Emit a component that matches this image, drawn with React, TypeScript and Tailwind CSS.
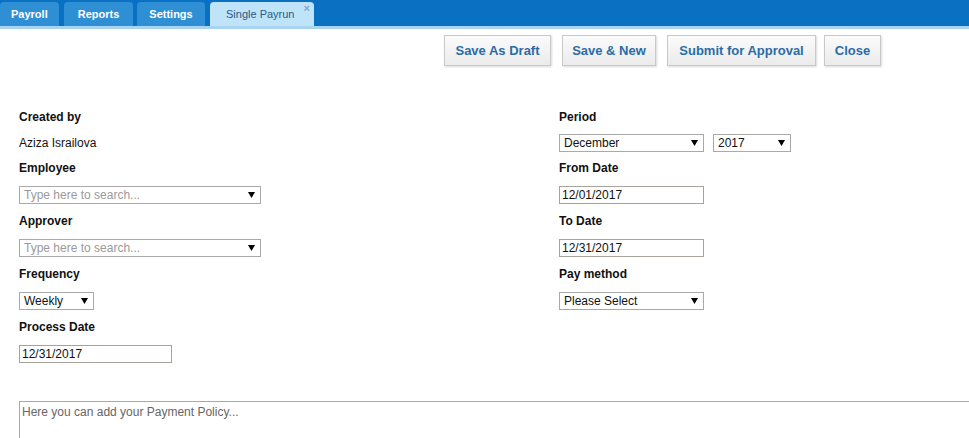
import React from 'react';

const font = { fontFamily: '"Liberation Sans", Arial, sans-serif' };

function Tab({ label, width, active }: { label: string; width: string; active?: boolean }) {
  if (active) {
    return (
      <div className={`relative h-[24px] rounded-t-[4px] bg-[#bfe4fa] pl-[16px] text-[11px] leading-[24px] text-[#2a5a85] ${width}`}>
        {label}
        <span className="absolute right-[4px] top-[-6px] text-[11px] font-bold text-[#7fa6c6]">×</span>
      </div>
    );
  }
  return (
    <div className={`h-[24px] rounded-t-[4px] bg-[#2f8fd5] text-center text-[11px] font-bold leading-[24px] text-white ${width}`}>
      {label}
    </div>
  );
}

function ActionButton({ label, width }: { label: string; width: string }) {
  return (
    <button
      className={`h-[31px] border border-[#c9c9c9] bg-gradient-to-b from-[#fbfbfb] to-[#ebebeb] text-center text-[13px] font-bold text-[#2b6ca6] shadow-[1px_1px_2px_rgba(0,0,0,0.15)] ${width}`}
    >
      {label}
    </button>
  );
}

function Label({ children }: { children: React.ReactNode }) {
  return <div className="h-[17px] text-[12px] font-bold leading-[17px] text-[#111]">{children}</div>;
}

function FakeSelect({ value, width, placeholder }: { value: string; width: string; placeholder?: boolean }) {
  return (
    <div
      className={`flex h-[18px] items-center justify-between border border-[#a9a9a9] bg-white pl-[4px] pr-[5px] text-[12px] ${width} ${
        placeholder ? 'text-[#9a9a9a]' : 'text-[#111]'
      }`}
    >
      <span>{value}</span>
      <svg width="7" height="6" viewBox="0 0 7 6">
        <path d="M0 0H7L3.5 6Z" fill="#000" />
      </svg>
    </div>
  );
}

function DateInput({ value, width }: { value: string; width: string }) {
  return (
    <div className={`flex h-[18px] items-center border border-[#a7a39a] bg-white pl-[2px] text-[12px] text-[#111] ${width}`}>
      {value}
    </div>
  );
}

export default function App() {
  return (
    <div className="relative h-[438px] w-[969px] overflow-hidden bg-white" style={font}>
      <div className="flex h-[26px] items-end bg-[#0a71c2]">
        <Tab label="Payroll" width="w-[59px] !text-left pl-[11px]" />
        <div className="ml-[5px]">
          <Tab label="Reports" width="w-[69px]" />
        </div>
        <div className="ml-[4px]">
          <Tab label="Settings" width="w-[68px]" />
        </div>
        <div className="ml-[5px]">
          <Tab label="Single Payrun" width="w-[104px]" active />
        </div>
      </div>
      <div className="h-[3px] bg-[#a9d4f1]" />

      <div className="mt-[6px] flex justify-end pr-[88px]">
        <ActionButton label="Save As Draft" width="w-[107px]" />
        <div className="ml-[11px]">
          <ActionButton label="Save & New" width="w-[94px]" />
        </div>
        <div className="ml-[11px]">
          <ActionButton label="Submit for Approval" width="w-[149px]" />
        </div>
        <div className="ml-[8px]">
          <ActionButton label="Close" width="w-[57px]" />
        </div>
      </div>

      <div className="mt-[43px] grid grid-cols-[540px_1fr] pl-[19px]">
        <div className="flex flex-col">
          <Label>Created by</Label>
          <div className="mt-[8px] h-[18px] text-[12px] leading-[18px] text-[#111]">Aziza Israilova</div>
          <div className="mt-[8px]">
            <Label>Employee</Label>
          </div>
          <div className="mt-[9px]">
            <FakeSelect value="Type here to search..." width="w-[242px]" placeholder />
          </div>
          <div className="mt-[9px]">
            <Label>Approver</Label>
          </div>
          <div className="mt-[9px]">
            <FakeSelect value="Type here to search..." width="w-[242px]" placeholder />
          </div>
          <div className="mt-[9px]">
            <Label>Frequency</Label>
          </div>
          <div className="mt-[9px]">
            <FakeSelect value="Weekly" width="w-[75px]" />
          </div>
          <div className="mt-[9px]">
            <Label>Process Date</Label>
          </div>
          <div className="mt-[9px]">
            <DateInput value="12/31/2017" width="w-[153px]" />
          </div>
        </div>

        <div className="flex flex-col">
          <Label>Period</Label>
          <div className="mt-[8px] flex gap-[9px]">
            <FakeSelect value="December" width="w-[145px]" />
            <FakeSelect value="2017" width="w-[78px]" />
          </div>
          <div className="mt-[8px]">
            <Label>From Date</Label>
          </div>
          <div className="mt-[9px]">
            <DateInput value="12/01/2017" width="w-[145px]" />
          </div>
          <div className="mt-[9px]">
            <Label>To Date</Label>
          </div>
          <div className="mt-[9px]">
            <DateInput value="12/31/2017" width="w-[145px]" />
          </div>
          <div className="mt-[9px]">
            <Label>Pay method</Label>
          </div>
          <div className="mt-[9px]">
            <FakeSelect value="Please Select" width="w-[145px]" />
          </div>
        </div>
      </div>

      <div className="mt-[38px] pl-[19px]">
        <div className="h-[80px] w-[1000px] border border-[#a9a9a9] px-[2px] pt-[1px] text-[12px] text-[#666]">
          Here you can add your Payment Policy...
        </div>
      </div>
    </div>
  );
}
